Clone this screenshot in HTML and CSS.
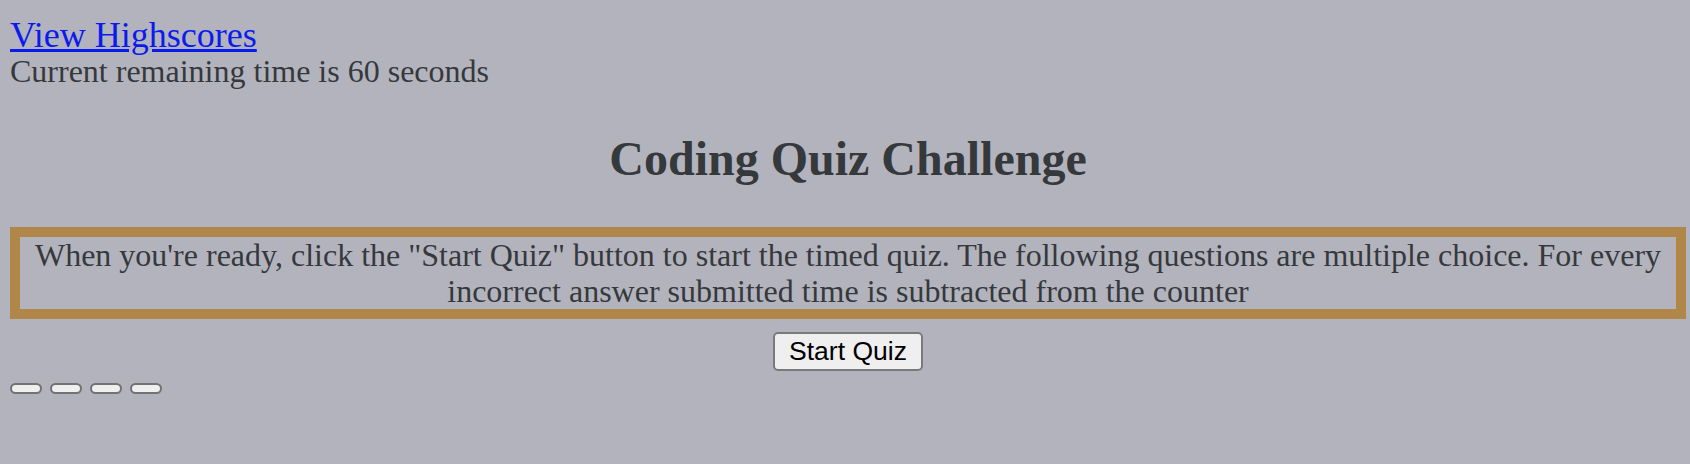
FILE: index.html
```html
<!DOCTYPE html>
<html lang="en">
<head>
<meta charset="utf-8">
<title>Coding Quiz Challenge</title>
<link rel="stylesheet" href="styles.css">
</head>
<body>
<header class="top">
  <a class="highscores" href="#">View Highscores</a>
  <div class="timer">Current remaining time is 60 seconds</div>
</header>
<main>
  <h2 class="title">Coding Quiz Challenge</h2>
  <p class="intro">When you're ready, click the "Start Quiz" button to start the timed quiz. The following questions are multiple choice. For every incorrect answer submitted time is subtracted from the counter</p>
  <div class="start-row"><button class="start-btn" type="button">Start Quiz</button></div>
  <div class="choices">
    <button class="choice" type="button"></button>
    <button class="choice" type="button"></button>
    <button class="choice" type="button"></button>
    <button class="choice" type="button"></button>
  </div>
</main>
</body>
</html>
```
FILE: styles.css
```css
html, body {
  background: #b3b3bd;
}
body {
  margin: 10px 4px 10px 10px;
  font-family: "Liberation Serif", "Times New Roman", serif;
  font-size: 32px;
  color: #35393c;
}
.top {
  padding-top: 7px;
}
.highscores {
  display: block;
  width: max-content;
  font-size: 36px;
  line-height: 36px;
  color: #0a1bee;
  text-decoration: underline;
}
.timer {
  line-height: 36px;
}
.title {
  margin: 42px 0 41px;
  font-size: 48px;
  font-weight: bold;
  text-align: center;
  line-height: normal;
}
.intro {
  margin: 0;
  border: 10px solid #b08748;
  line-height: 36px;
  text-align: center;
}
.start-row {
  display: flex;
  justify-content: center;
  margin-top: 13px;
}
.start-btn {
  font-family: "Liberation Sans", Arial, sans-serif;
  font-size: 26.5px;
  color: #000;
  background: #efefef;
  border: 2px solid #7a7a7a;
  border-radius: 5px;
  padding: 2px 14px;
  line-height: 31px;
  height: 39px;
  box-sizing: border-box;
  display: flex;
  align-items: center;
}
.choices {
  display: flex;
  gap: 8px;
  margin-top: 12px;
}
.choice {
  width: 32px;
  height: 11px;
  padding: 0;
  box-sizing: border-box;
  background: #efefef;
  border: 2px solid #727272;
  border-radius: 6px;
}
```
